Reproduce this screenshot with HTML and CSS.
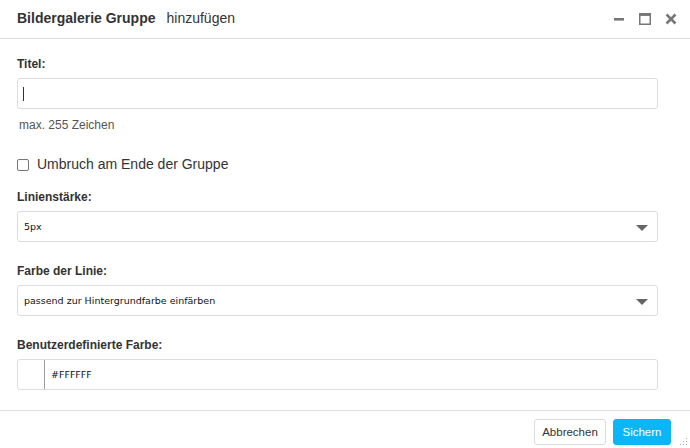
FILE: index.html
```html
<!DOCTYPE html>
<html lang="de">
<head>
<meta charset="utf-8">
<link rel="stylesheet" href="styles.css">
</head>
<body>
<div class="dialog">
  <div class="header">
    <div class="title"><b>Bildergalerie Gruppe</b><span class="sub">hinzufügen</span></div>
    <div class="controls">
      <svg class="ico" width="12" height="12" viewBox="0 0 12 12"><rect x="1" y="5" width="10" height="2.6" fill="#777"/></svg>
      <svg class="ico" width="12" height="12" viewBox="0 0 12 12"><rect x="0.75" y="0.75" width="10.5" height="10.5" fill="none" stroke="#777" stroke-width="1.5"/><rect x="0.75" y="0.75" width="10.5" height="2.2" fill="#777"/></svg>
      <svg class="ico" width="12" height="12" viewBox="0 0 12 12"><path d="M1.5 1.5 L10.5 10.5 M10.5 1.5 L1.5 10.5" stroke="#777" stroke-width="2.6"/></svg>
    </div>
  </div>
  <div class="body">
    <label class="lbl">Titel:</label>
    <div class="input"><span class="caret"></span></div>
    <div class="hint">max. 255 Zeichen</div>
    <div class="check"><span class="box"></span><span>Umbruch am Ende der Gruppe</span></div>
    <label class="lbl">Linienstärke:</label>
    <div class="input select"><span class="val">5px</span><span class="arrow"></span></div>
    <label class="lbl lbl-gap">Farbe der Linie:</label>
    <div class="input select"><span class="val">passend zur Hintergrundfarbe einfärben</span><span class="arrow"></span></div>
    <label class="lbl lbl-gap">Benutzerdefinierte Farbe:</label>
    <div class="input color"><span class="swatch"></span><span class="val">#FFFFFF</span></div>
  </div>
  <div class="footer">
    <button class="btn cancel">Abbrechen</button>
    <button class="btn primary">Sichern</button>
    <svg class="grip" width="9" height="9" viewBox="0 0 9 9"><g fill="#aaa"><rect x="7" y="1" width="1" height="1"/><rect x="4" y="4" width="1" height="1"/><rect x="7" y="4" width="1" height="1"/><rect x="1" y="7" width="1" height="1"/><rect x="4" y="7" width="1" height="1"/><rect x="7" y="7" width="1" height="1"/></g></svg>
  </div>
</div>
</body>
</html>
```
FILE: styles.css
```css
* { box-sizing: border-box; }
html, body { margin: 0; padding: 0; background: #fff; }
body { font-family: "Liberation Sans", Arial, sans-serif; color: #333; }
.dialog { width: 690px; height: 448px; display: flex; flex-direction: column; position: relative; }
.header { height: 39px; border-bottom: 1px solid #ddd; display: flex; align-items: center; justify-content: space-between; padding: 0 13px 0 17px; }
.title { font-size: 14px; color: #333; margin-top: -2px; }
.title b { font-weight: bold; }
.title .sub { margin-left: 11px; }
.controls { display: flex; gap: 14px; align-items: center; }
.ico { display: block; }
.body { flex: 1; padding: 18px 32px 0 17px; display: flex; flex-direction: column; }
.lbl { font-size: 12px; font-weight: bold; color: #333; line-height: 15px; margin-bottom: 6px; display: block; }
.lbl-gap { margin-top: 22px; }
.input { height: 31px; border: 1px solid #ddd; border-radius: 3px; display: flex; align-items: center; padding: 0 5px; position: relative; }
.caret { width: 1px; height: 14px; background: #333; }
.hint { font-size: 12px; color: #555; margin: 9px 0 0 2px; line-height: 14px; }
.check { display: flex; align-items: center; font-size: 14px; color: #333; margin: 24px 0 17px; line-height: 17px; }
.check .box { width: 12px; height: 12px; border: 1px solid #777; border-radius: 2px; margin-right: 8px; }
.select .val, .color .val { font-family: "DejaVu Sans", Verdana, sans-serif; font-size: 9.5px; color: #111; }
.select { justify-content: space-between; padding: 0 9px 0 6px; }
.arrow { width: 0; height: 0; border-left: 6px solid transparent; border-right: 6px solid transparent; border-top: 6px solid #666; margin-top: 2px; }
.color { padding: 0; }
.swatch { width: 27px; height: 100%; border-right: 1px solid #999; margin-right: 6px; }
.footer { height: 38px; border-top: 1px solid #ddd; display: flex; justify-content: flex-end; align-items: flex-start; padding: 8px 19px 0 0; gap: 7px; position: relative; }
.btn { font-family: "Liberation Sans", Arial, sans-serif; font-size: 11.5px; height: 26px; border-radius: 3px; border: 1px solid #ddd; background: #fff; color: #333; padding: 0; }
.btn.cancel { width: 72px; }
.btn.primary { width: 58px; background: #0bb6f8; border-color: #0bb6f8; color: #fff; }
.grip { position: absolute; right: 2px; bottom: 2px; }
```
